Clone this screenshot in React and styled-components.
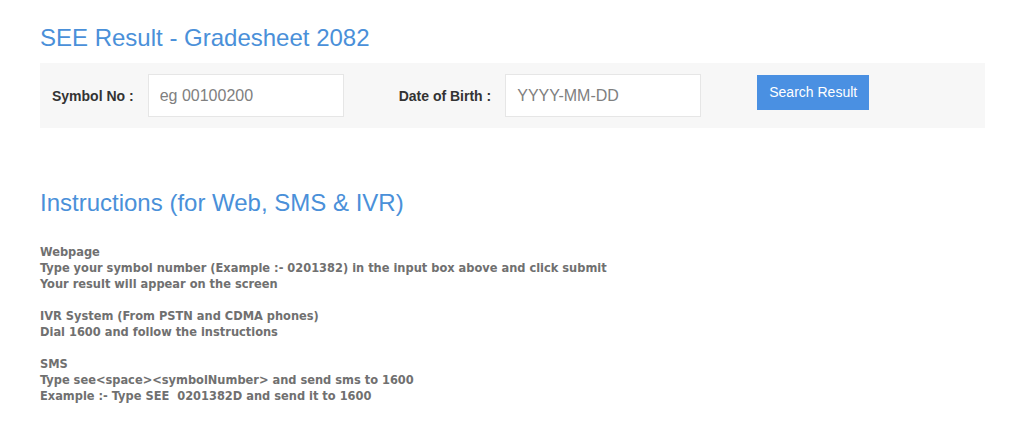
import React from "react";
import styled, { createGlobalStyle } from "styled-components";

const GlobalStyle = createGlobalStyle`
	body {
		margin: 0;
		background: #fff;
		font-family: "Liberation Sans", Arial, sans-serif;
	}
`;

const lines = [
	["Webpage", "Type your symbol number (Example :- 0201382) in the input box above and click submit", "Your result will appear on the screen"],
	["IVR System (From PSTN and CDMA phones)", "Dial 1600 and follow the instructions"],
	["SMS", "Type see<space><symbolNumber> and send sms to 1600", "Example :- Type SEE  0201382D and send it to 1600"],
];

function App() {
	return (
		<Page>
			<GlobalStyle />
			<Title>SEE Result - Gradesheet 2082</Title>
			<SearchBar onSubmit={(e) => e.preventDefault()}>
				<Label>Symbol No :</Label>
				<Input placeholder="eg 00100200" />
				<Label $gap>Date of Birth :</Label>
				<Input placeholder="YYYY-MM-DD" />
				<Button type="submit">Search Result</Button>
			</SearchBar>
			<SubTitle>Instructions (for Web, SMS &amp; IVR)</SubTitle>
			<Instructions>
				{lines.map((group, i) => (
					<Block key={i}>
						{group.map((line, j) => (
							<Line key={j}>{line}</Line>
						))}
					</Block>
				))}
			</Instructions>
		</Page>
	);
}

const Page = styled.div`
	padding: 24px 39px 0 40px;
`;

const Title = styled.h1`
	margin: 0;
	font-size: 24px;
	font-weight: 400;
	line-height: 28px;
	color: #4a90d9;
`;

const SearchBar = styled.form`
	display: flex;
	align-items: center;
	height: 65px;
	margin-top: 11px;
	padding: 0 12px;
	background: #f7f7f7;
`;

const Label = styled.label`
	font-size: 14px;
	font-weight: 700;
	color: #333;
	margin-left: ${(p) => (p.$gap ? "55px" : "0")};
	margin-right: 14px;
`;

const Input = styled.input`
	box-sizing: border-box;
	width: 196px;
	height: 43px;
	padding: 0 11px;
	border: 1px solid #e6e6e6;
	background: #fff;
	font-family: "Liberation Sans", Arial, sans-serif;
	font-size: 16px;
	color: #555;

	&::placeholder {
		color: #808080;
	}
`;

const Button = styled.button`
	height: 35px;
	margin-left: 56px;
	margin-top: -7px;
	padding: 0 12px;
	border: none;
	background: #4a90e2;
	color: #fff;
	font-family: "Liberation Sans", Arial, sans-serif;
	font-size: 14px;
`;

const SubTitle = styled.h2`
	margin: 61px 0 0;
	font-size: 24px;
	font-weight: 400;
	line-height: 28px;
	color: #4a90d9;
`;

const Instructions = styled.div`
	margin-top: 27px;
	font-family: "DejaVu Sans Condensed", "DejaVu Sans", sans-serif;
	font-size: 12.7px;
	line-height: 16px;
	color: #707070;
	font-weight: 700;
`;

const Block = styled.div`
	& + & {
		margin-top: 16px;
	}
`;

const Line = styled.div`
	white-space: pre;
`;

export default App;
